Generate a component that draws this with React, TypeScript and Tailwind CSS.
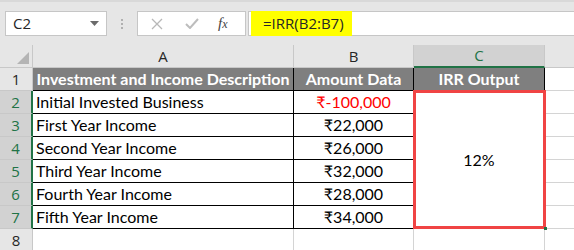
import React from 'react';

const rows = [
  { a: 'Initial Invested Business', b: '₹-100,000', red: true },
  { a: 'First Year Income', b: '₹22,000' },
  { a: 'Second Year Income', b: '₹26,000' },
  { a: 'Third Year Income', b: '₹32,000' },
  { a: 'Fourth Year Income', b: '₹28,000' },
  { a: 'Fifth Year Income', b: '₹34,000' },
];

const uiFont = { fontFamily: '"Open Sans", "Noto Sans", sans-serif' };
const cellFont = { fontFamily: 'Lato, "Liberation Sans", sans-serif' };

const RowHead = ({ n, active }: { n: number; active?: boolean }) => (
  <div
    className={`h-[23px] flex items-center justify-center text-[15px] border-b border-[#c8c8c8] ${
      active ? 'bg-[#d2d2d2] text-[#217346] border-r-2 border-r-[#217346]' : 'bg-[#e6e6e6] text-[#262626] border-r border-r-[#c8c8c8]'
    }`}
    style={uiFont}
  >
    {n}
  </div>
);

export default function App() {
  return (
    <div className="w-[574px] h-[250px] overflow-hidden bg-white">
      {/* formula bar */}
      <div className="h-[45px] bg-[#e6e6e6] border-t-2 border-[#d9d9d9] flex items-center pr-0" style={uiFont}>
        <div className="ml-[5px] w-[102px] h-[25px] bg-white border border-[#c6c6c6] flex items-center justify-between pl-[7px] pr-[7px]">
          <span className="text-[15px] text-[#262626]">C2</span>
          <svg width="9" height="5" viewBox="0 0 9 5">
            <path d="M0 0h9L4.5 5z" fill="#6b6b6b" />
          </svg>
        </div>
        <div className="w-[30px] flex flex-col items-center gap-[2px]">
          <span className="w-[2px] h-[2px] bg-[#b0b0b0]" />
          <span className="w-[2px] h-[2px] bg-[#b0b0b0]" />
          <span className="w-[2px] h-[2px] bg-[#b0b0b0]" />
        </div>
        <div className="w-[109px] h-[25px] bg-white border border-[#c6c6c6] flex items-center">
          <svg className="ml-[13px]" width="12" height="12" viewBox="0 0 12 12">
            <path d="M1 1l10 10M11 1L1 11" stroke="#b8b8b8" strokeWidth="1.3" />
          </svg>
          <svg className="ml-[22px]" width="14" height="11" viewBox="0 0 14 11">
            <path d="M1 6l4 4 8-9" stroke="#bdbdbd" strokeWidth="2" fill="none" />
          </svg>
          <span
            className="ml-[19px] text-[15px] italic text-[#444]"
            style={{ fontFamily: '"Liberation Serif", serif' }}
          >
            f<span className="text-[12px]">x</span>
          </span>
        </div>
        <div className="ml-[2px] flex-1 h-[25px] bg-white border border-r-0 border-[#c6c6c6] flex items-center">
          <div className="ml-[2px] w-[101px] h-[25px] bg-[#ffff00] flex items-center pl-[12px] text-[15px] text-[#262626]">
            =IRR(B2:B7)
          </div>
        </div>
      </div>

      {/* grid */}
      <div className="grid grid-cols-[33px_261px_120px_131px_1fr]">
        {/* column headers */}
        <div className="h-[23px] bg-[#e6e6e6] border-r border-b border-[#c8c8c8] flex items-end justify-end p-[3px]">
          <svg width="12" height="12" viewBox="0 0 12 12">
            <path d="M12 0v12H0z" fill="#b4b4b4" />
          </svg>
        </div>
        <div className="h-[23px] bg-[#e6e6e6] border-r border-b border-[#c8c8c8] flex items-center justify-center text-[15px] text-[#262626]" style={uiFont}>A</div>
        <div className="h-[23px] bg-[#e6e6e6] border-r border-b border-[#c8c8c8] flex items-center justify-center text-[15px] text-[#262626]" style={uiFont}>B</div>
        <div className="h-[23px] bg-[#d2d2d2] border-r border-[#c8c8c8] border-b-2 border-b-[#217346] flex items-center justify-center text-[15px] text-[#217346]" style={uiFont}>C</div>
        <div className="h-[23px] bg-[#e6e6e6] border-b border-[#c8c8c8]" />

        {/* row 1 */}
        <RowHead n={1} />
        <div className="h-[23px] bg-[#7f7f7f] border-r border-b border-black flex items-center justify-center text-[16px] font-bold text-white" style={cellFont}>
          Investment and Income Description
        </div>
        <div className="h-[23px] bg-[#7f7f7f] border-r border-b border-black flex items-center justify-center text-[16px] font-bold text-white" style={cellFont}>
          Amount Data
        </div>
        <div className="h-[23px] bg-[#7f7f7f] border-r border-b border-black flex items-center justify-center text-[16px] font-bold text-white" style={cellFont}>
          IRR Output
        </div>
        <div className="h-[23px] border-b border-[#d4d4d4]" />

        {/* rows 2-7 */}
        {rows.map((r, i) => (
          <React.Fragment key={i}>
            <RowHead n={i + 2} active />
            <div className="h-[23px] border-r border-b border-black flex items-center pl-[3px] text-[16px] text-black" style={cellFont}>
              {r.a}
            </div>
            <div
              className={`h-[23px] border-r border-b border-black flex items-center justify-center text-[16px] ${r.red ? 'text-[#ff0000]' : 'text-black'}`}
              style={cellFont}
            >
              {r.b}
            </div>
            {i === 0 && (
              <div className="row-span-6 relative border-r border-b border-black flex items-center justify-center text-[16px] text-black" style={cellFont}>
                12%
                <div className="absolute left-[-1px] top-[-1px] right-[-2px] bottom-[-1px] border-[3px] border-[#f04444]" />
                <div className="absolute right-[-3px] bottom-[-2px] w-[3px] h-[3px] bg-[#217346]" />
              </div>
            )}
            <div className="h-[23px] border-b border-[#d4d4d4]" />
          </React.Fragment>
        ))}

        {/* row 8 */}
        <RowHead n={8} />
        <div className="h-[23px] border-r border-b border-[#d4d4d4]" />
        <div className="h-[23px] border-r border-b border-[#d4d4d4]" />
        <div className="h-[23px] border-r border-b border-[#d4d4d4]" />
        <div className="h-[23px] border-b border-[#d4d4d4]" />
      </div>
    </div>
  );
}
